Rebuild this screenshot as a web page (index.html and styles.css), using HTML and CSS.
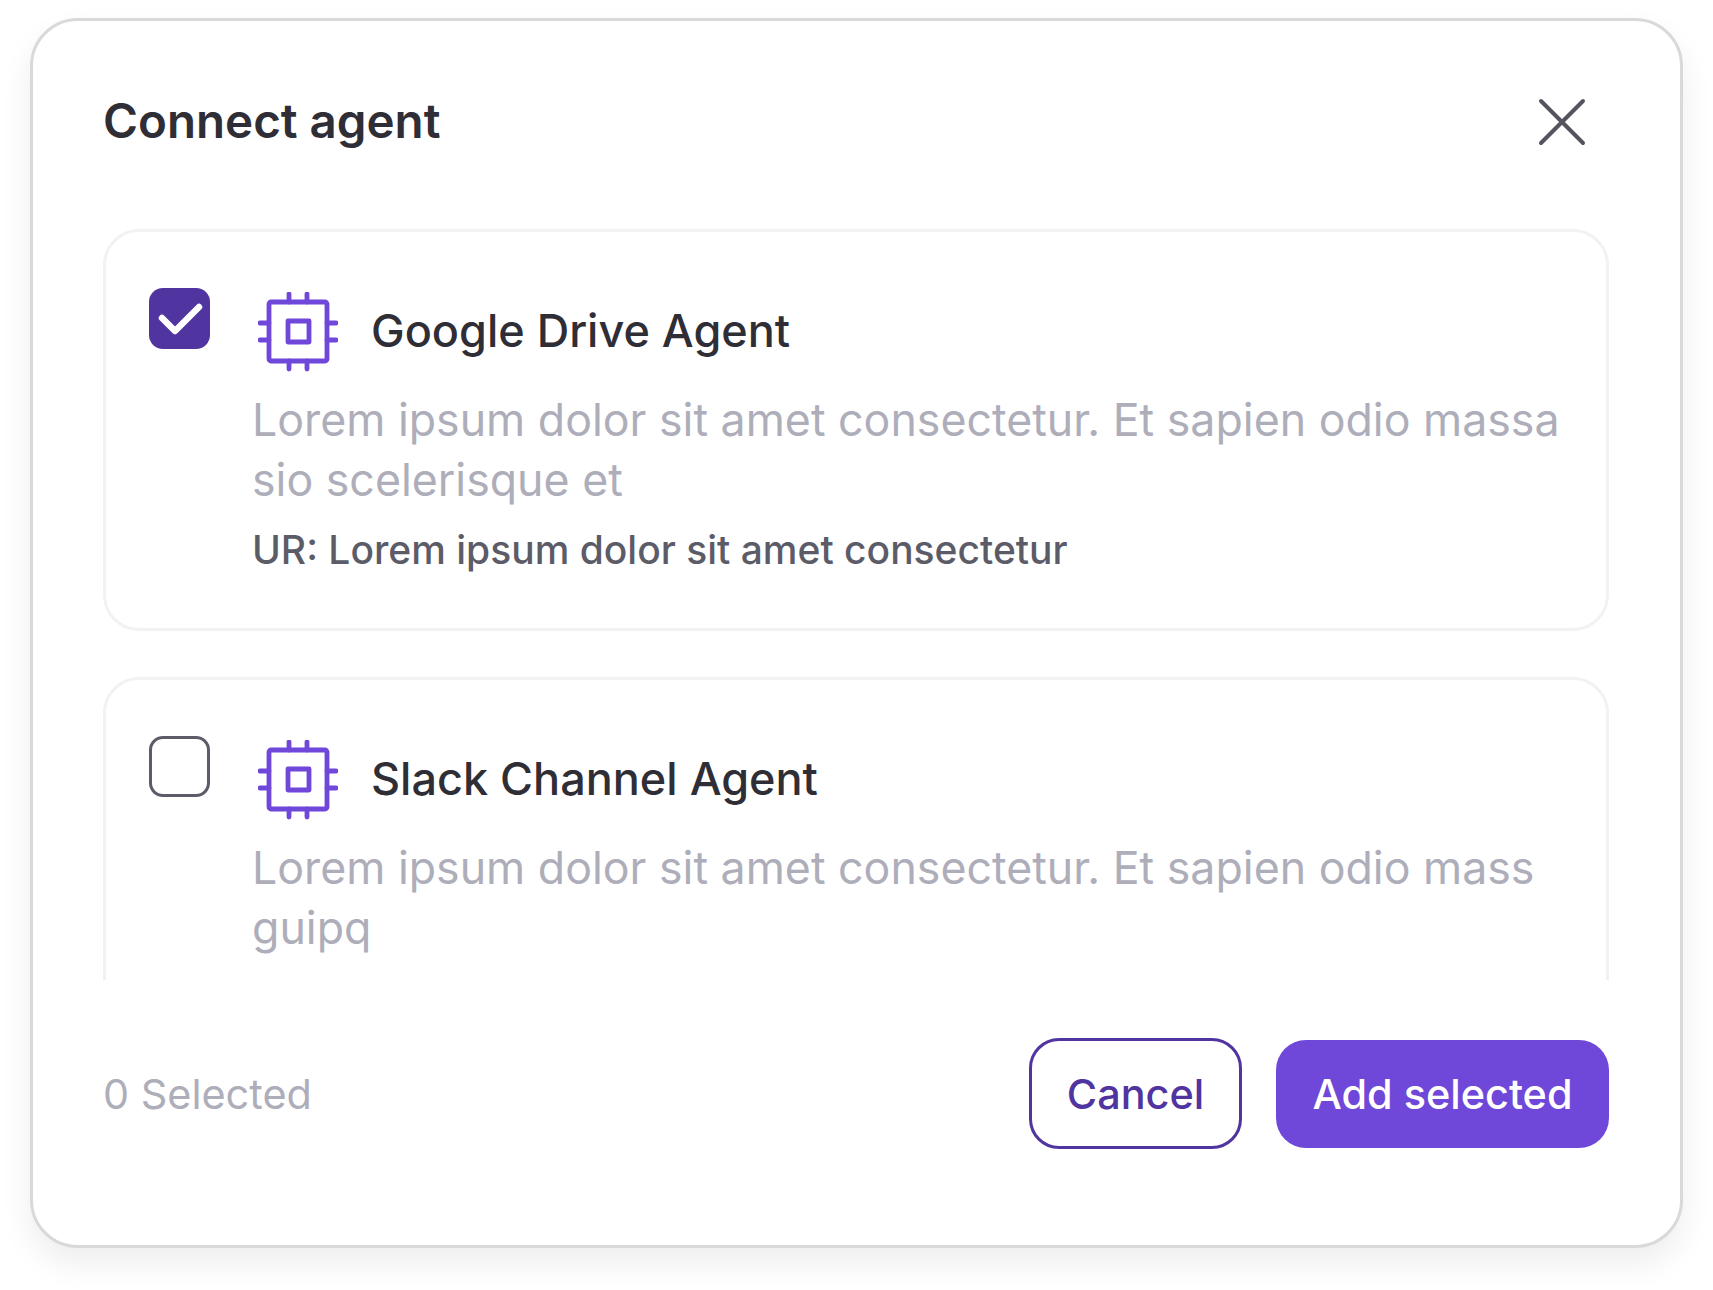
FILE: index.html
```html
<!DOCTYPE html>
<html lang="en">
<head>
    <meta charset="UTF-8">
    <title>Connect agent</title>
    <link rel="stylesheet" href="styles.css">
</head>
<body>
    <div class="modal">
        <div class="modal-header">
            <h1>Connect agent</h1>
            <svg class="close-icon" viewBox="0 0 48 48" fill="none" stroke="#54545e" stroke-width="4" stroke-linecap="round">
                <path d="M3 3L45 45M45 3L3 45"/>
            </svg>
        </div>

        <!-- Agent list, cut off by the footer -->
        <div class="agent-list">
            <div class="agent-card">
                <div class="checkbox checked">
                    <svg viewBox="0 0 61 61" fill="none" stroke="#fff" stroke-width="6.5" stroke-linecap="round" stroke-linejoin="round">
                        <path d="M13 30L26 43L50 19"/>
                    </svg>
                </div>
                <div class="agent-body">
                    <div class="agent-title">
                        <svg class="chip-icon" viewBox="0 0 80 80" fill="none" stroke="#6f47d9" stroke-width="4.8" stroke-linecap="round" stroke-linejoin="round">
                            <rect x="11" y="10" width="58" height="59" rx="2"/>
                            <rect x="30" y="29" width="21" height="21"/>
                            <path d="M31 2V10M49 2V10M31 69V77M49 69V77M2 31H11M2 48H11M69 31H78M69 48H78"/>
                        </svg>
                        <span>Google Drive Agent</span>
                    </div>
                    <p class="agent-desc">Lorem ipsum dolor sit amet consectetur. Et sapien odio massa sio scelerisque et</p>
                    <p class="agent-url">UR: Lorem ipsum dolor sit amet consectetur</p>
                </div>
            </div>

            <div class="agent-card">
                <div class="checkbox"></div>
                <div class="agent-body">
                    <div class="agent-title">
                        <svg class="chip-icon" viewBox="0 0 80 80" fill="none" stroke="#6f47d9" stroke-width="4.8" stroke-linecap="round" stroke-linejoin="round">
                            <rect x="11" y="10" width="58" height="59" rx="2"/>
                            <rect x="30" y="29" width="21" height="21"/>
                            <path d="M31 2V10M49 2V10M31 69V77M49 69V77M2 31H11M2 48H11M69 31H78M69 48H78"/>
                        </svg>
                        <span>Slack Channel Agent</span>
                    </div>
                    <p class="agent-desc">Lorem ipsum dolor sit amet consectetur. Et sapien odio mass guipq</p>
                </div>
            </div>
        </div>

        <div class="modal-footer">
            <span class="selected-count">0 Selected</span>
            <div class="actions">
                <button class="btn btn-outline">Cancel</button>
                <button class="btn btn-primary">Add selected</button>
            </div>
        </div>
    </div>
</body>
</html>
```

FILE: styles.css
```css
body {
    font-family: Inter, "Liberation Sans", sans-serif;
    margin: 0;
    padding: 18px 30px 42px 30px;
    background-color: #fff;
    color: #2f2e36;
}

.modal {
    box-sizing: border-box;
    height: 1230px;
    padding: 0 71px 0 70px;
    background-color: #fff;
    border: 3px solid #d9d9d9;
    border-radius: 48px;
    box-shadow: 0 16px 32px rgba(0, 0, 0, 0.07);
}

/* Header */
.modal-header {
    box-sizing: border-box;
    display: flex;
    justify-content: space-between;
    align-items: center;
    height: 208px;
    padding: 0 23px 10px 0;
}

.modal-header h1 {
    margin: 0;
    font-size: 47.5px;
    font-weight: 600;
}

.close-icon {
    width: 48px;
    height: 48px;
    margin-top: 4px;
}

/* Agent cards */
.agent-list {
    display: flex;
    flex-direction: column;
    gap: 46px;
    height: 751px;
    overflow: hidden;
}

.agent-card {
    flex-shrink: 0;
    box-sizing: border-box;
    height: 402px;
    display: flex;
    gap: 42px;
    padding: 56px 20px 0 43px;
    border: 3px solid #f2f2f3;
    border-radius: 36px;
}

.checkbox {
    box-sizing: border-box;
    flex-shrink: 0;
    width: 61px;
    height: 61px;
    border: 3px solid #5c5c68;
    border-radius: 14px;
}

.checkbox.checked {
    border: none;
    background-color: #50349f;
}

.checkbox svg {
    display: block;
}

.agent-title {
    display: flex;
    align-items: center;
    gap: 33px;
    margin: 4px 0 0 6px;
    font-size: 45px;
    font-weight: 500;
}

.agent-title span {
    margin-bottom: 4px;
}

.chip-icon {
    width: 80px;
    height: 80px;
}

.agent-desc {
    margin: 18px 0 0;
    font-size: 44.7px;
    line-height: 60px;
    color: #aeaeba;
}

.agent-url {
    margin: 16px 0 0;
    font-size: 39px;
    font-weight: 500;
    color: #5c5c68;
}

/* Footer */
.modal-footer {
    display: flex;
    justify-content: space-between;
    align-items: center;
    padding-top: 58px;
}

.selected-count {
    font-size: 41.4px;
    color: #aeaeba;
}

.actions {
    display: flex;
    gap: 34px;
    align-items: center;
}

.btn {
    box-sizing: border-box;
    height: 108px;
    padding: 0;
    font-family: inherit;
    font-size: 41.4px;
    font-weight: 500;
    white-space: nowrap;
    border-radius: 30px;
    cursor: pointer;
}

.btn-outline {
    width: 213px;
    height: 111px;
    color: #50349f;
    background-color: #fff;
    border: 3px solid #50349f;
}

.btn-primary {
    width: 333px;
    color: #fff;
    background-color: #6f47d9;
    border: none;
}
```
